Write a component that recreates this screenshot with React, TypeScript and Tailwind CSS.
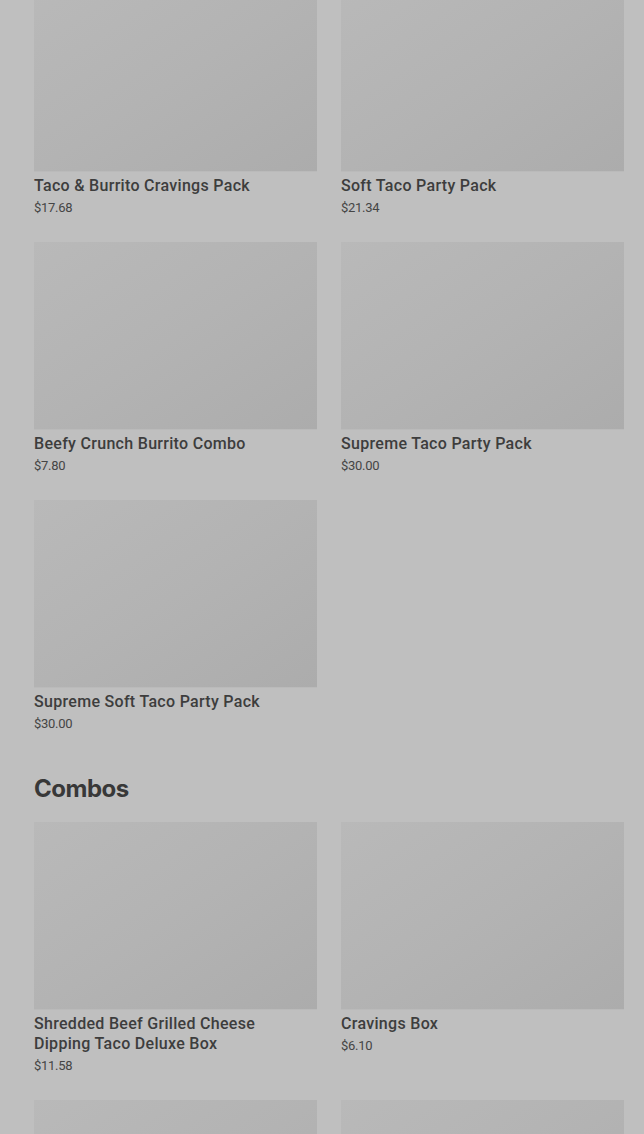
const partyPacks = [
  { name: 'Taco & Burrito Cravings Pack', price: '$17.68' },
  { name: 'Soft Taco Party Pack', price: '$21.34' },
  { name: 'Beefy Crunch Burrito Combo', price: '$7.80' },
  { name: 'Supreme Taco Party Pack', price: '$30.00' },
  { name: 'Supreme Soft Taco Party Pack', price: '$30.00' },
];

const combos = [
  { name: 'Shredded Beef Grilled Cheese Dipping Taco Deluxe Box', price: '$11.58' },
  { name: 'Cravings Box', price: '$6.10' },
  { name: 'Chicken Quesadilla Combo', price: '$9.49' },
  { name: 'Build Your Own Cravings Box', price: '$6.10' },
];

type Item = { name: string; price: string };

function ProductCard({ item }: { item: Item }) {
  return (
    <div className="flex flex-col">
      <div className="h-[188px] w-full bg-linear-to-br from-[#b9b9b9] via-[#b3b3b3] to-[#acacac] border-b border-[#bababa]" />
      <div className="mt-[4px] text-[16px] leading-5 font-medium text-[#3d3d3d] tracking-[0.3px] pr-4">{item.name}</div>
      <div className="mt-[3px] text-[13px] leading-[18px] text-[#454545] tracking-[-0.3px]">{item.price}</div>
    </div>
  );
}

function ProductGrid({ items }: { items: Item[] }) {
  return (
    <div className="grid grid-cols-2 gap-x-6 gap-y-[25px]">
      {items.map((item) => (
        <ProductCard key={item.name} item={item} />
      ))}
    </div>
  );
}

export default function App() {
  return (
    <div
      className="h-screen w-full overflow-hidden bg-[#bfbfbf]"
      style={{ fontFamily: 'Roboto, "Liberation Sans", sans-serif' }}
    >
      <div className="-mt-[16px] pl-[34px] pr-[20px]">
        <ProductGrid items={partyPacks} />

        <h2
          className="mt-[41px] text-[24px] leading-[30px] font-bold text-[#383838] tracking-[-0.5px]"
          style={{ fontFamily: 'Inter, "Liberation Sans", sans-serif' }}
        >
          Combos
        </h2>

        <div className="mt-[18px]">
          <ProductGrid items={combos} />
        </div>
      </div>
    </div>
  );
}
